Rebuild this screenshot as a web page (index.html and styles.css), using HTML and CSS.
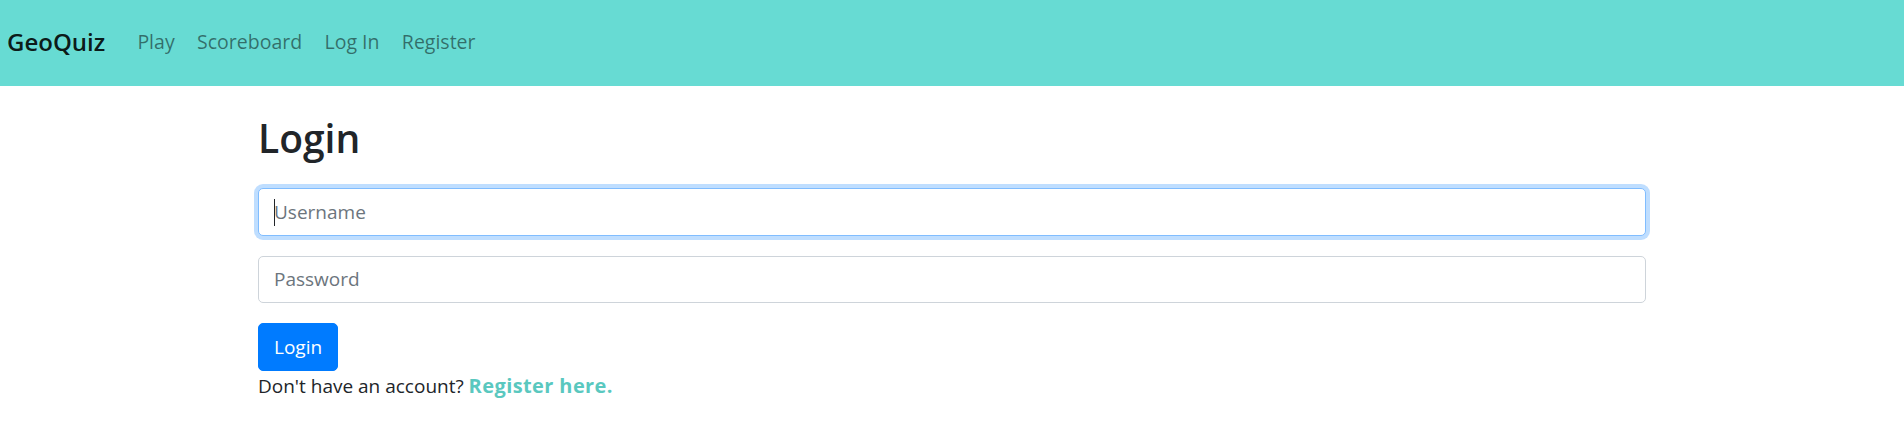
FILE: index.html
```html
<!DOCTYPE html>
<html lang="en">
<head>
<meta charset="utf-8">
<title>GeoQuiz - Login</title>
<link rel="stylesheet" href="styles.css">
</head>
<body>
<nav class="navbar">
  <a class="brand" href="#">GeoQuiz</a>
  <ul class="nav-links">
    <li><a class="nav-link" href="#">Play</a></li>
    <li><a class="nav-link" href="#">Scoreboard</a></li>
    <li><a class="nav-link" href="#">Log In</a></li>
    <li><a class="nav-link" href="#">Register</a></li>
  </ul>
</nav>
<main class="container">
  <h1 class="title">Login</h1>
  <form class="login-form">
    <div class="form-group field-wrap">
      <input class="form-control focused" type="text" placeholder="Username">
      <span class="caret"></span>
    </div>
    <div class="form-group">
      <input class="form-control" type="password" placeholder="Password">
    </div>
    <button class="btn-primary" type="button">Login</button>
  </form>
  <p class="register-note">Don't have an account? <a class="register-link" href="#">Register here.</a></p>
</main>
</body>
</html>
```
FILE: styles.css
```css
* { box-sizing: border-box; }
html, body { margin: 0; padding: 0; }
body {
  font-family: "Open Sans", "Noto Sans", sans-serif;
  font-size: 19px;
  line-height: 30px;
  color: #212529;
  background: #fff;
}
.navbar {
  height: 86px;
  background: #67dbd3;
  display: flex;
  align-items: center;
  padding: 0 0 2px 7px;
}
.brand {
  font-size: 24px;
  font-weight: 600;
  color: rgba(0, 0, 0, 0.9);
  text-decoration: none;
  margin-right: 21px;
}
.nav-links {
  list-style: none;
  margin: 0;
  padding: 0;
  display: flex;
}
.nav-link {
  display: block;
  padding: 0 11.2px;
  font-size: 19.5px;
  color: rgba(0, 0, 0, 0.5);
  text-decoration: none;
}
.container {
  width: 1388px;
  margin: 0 auto;
}
.title {
  font-size: 39px;
  font-weight: 600;
  line-height: 48px;
  margin: 0;
  padding-top: 28px;
  padding-bottom: 26px;
  color: #212529;
}
.form-group { margin-bottom: 20px; }
.field-wrap { position: relative; }
.form-control {
  display: block;
  width: 100%;
  height: 47.5px;
  padding: 0 15px;
  font-family: inherit;
  font-size: 19px;
  color: #495057;
  background: #fff;
  border: 1.25px solid #ced4da;
  border-radius: 5px;
  outline: none;
}
.form-control::placeholder { color: #6c757d; }
.form-control.focused {
  border-color: #80bdff;
  box-shadow: 0 0 0 4px rgba(0, 123, 255, 0.25);
}
.caret {
  position: absolute;
  left: 16px;
  top: 11px;
  width: 1px;
  height: 27px;
  background: #212529;
}
.btn-primary {
  display: block;
  height: 47.5px;
  padding: 0 15px;
  font-family: inherit;
  font-size: 19px;
  color: #fff;
  background: #007bff;
  border: 1.25px solid #007bff;
  border-radius: 5px;
}
.register-note { margin: 0; }
.register-link {
  color: #5ac8bf;
  font-size: 20px;
  font-weight: 700;
  letter-spacing: 0.4px;
  text-decoration: none;
}
```
